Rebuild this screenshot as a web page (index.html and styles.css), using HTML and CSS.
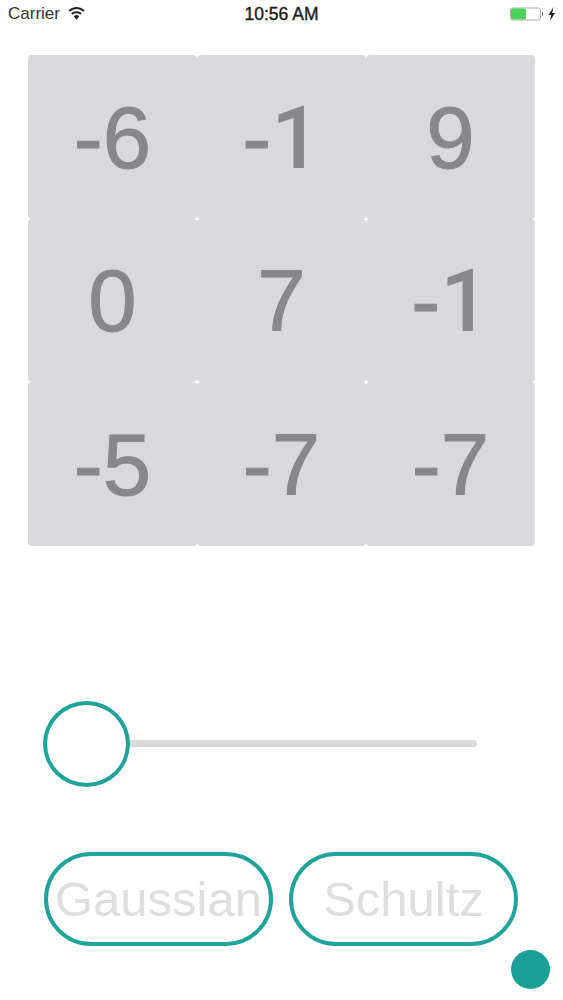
FILE: index.html
```html
<!DOCTYPE html>
<html lang="en">
<head>
    <meta charset="UTF-8">
    <meta name="viewport" content="width=device-width, initial-scale=1.0">
    <title>Noise Matrix</title>
    <link rel="stylesheet" href="styles.css">
</head>
<body>
    <div class="status-bar">
        <div class="status-left">
            <span>Carrier</span>
            <svg class="wifi-icon" width="17" height="13" viewBox="0 0 16 12">
                <path d="M8 11.800 5.400 8.700a3.800 3.800 0 0 1 5.200 0z" fill="#222"/>
                <path d="M3.700 6.500a6.400 6.400 0 0 1 8.600 0" fill="none" stroke="#222" stroke-width="2"/>
                <path d="M1 3.600a10.300 10.300 0 0 1 14 0" fill="none" stroke="#222" stroke-width="2"/>
            </svg>
        </div>
        <div class="status-time">10:56 AM</div>
        <div class="status-right">
            <svg width="45" height="14" viewBox="0 0 45 14">
                <rect x="0.500" y="1" width="30" height="12" rx="2.500" fill="#fff" stroke="#aaa"/>
                <rect x="1" y="1.500" width="15" height="11" rx="2" fill="#4cd35a"/>
                <path d="M32 5c1.400 0 1.400 4 0 4z" fill="#444"/>
                <path d="M43.500 0 38.500 8h2.800L40 14 45 6h-2.800z" fill="#222"/>
            </svg>
        </div>
    </div>

    <div class="matrix">
        <div class="cell">-6</div>
        <div class="cell">-<span class="digit-one">1</span></div>
        <div class="cell">9</div>
        <div class="cell">0</div>
        <div class="cell">7</div>
        <div class="cell">-<span class="digit-one">1</span></div>
        <div class="cell">-5</div>
        <div class="cell">-7</div>
        <div class="cell">-7</div>
    </div>

    <div class="slider">
        <div class="slider-thumb"></div>
        <div class="slider-track"></div>
    </div>

    <div class="buttons">
        <div class="pill-button">Gaussian</div>
        <div class="pill-button">Schultz</div>
    </div>

    <div class="floating-dot"></div>
</body>
</html>
```

FILE: styles.css
```css
* {
    margin: 0;
    padding: 0;
    box-sizing: border-box;
}

html, body {
    height: 100%;
}

body {
    position: relative;
    background: #ffffff;
    font-family: "Liberation Sans", Arial, sans-serif;
    overflow: hidden;
}

.status-bar {
    display: grid;
    grid-template-columns: 1fr auto 1fr;
    align-items: center;
    height: 28px;
    padding: 0 8px;
    font-size: 17px;
    color: #333333;
}

.status-left {
    display: flex;
    align-items: center;
    gap: 8px;
}

.wifi-icon {
    margin-top: -2px;
}

.status-time {
    font-size: 17.5px;
    color: #1c1c1c;
    -webkit-text-stroke: 0.4px #1c1c1c;
}

.status-right {
    display: flex;
    justify-content: flex-end;
}

.matrix {
    display: grid;
    grid-template-columns: repeat(3, 169px);
    grid-auto-rows: 163.67px;
    margin: 27px 0 0 28px;
}

.cell {
    display: flex;
    align-items: center;
    justify-content: center;
    padding-top: 2px;
    background: #d9d8db;
    border-radius: 4px;
    font-size: 87px;
    color: #88878a;
    -webkit-text-stroke: 1px #88878a;
}

/* liberation has a foot on its 1, the reference doesn't */
.digit-one {
    font-family: Roboto, "Liberation Sans", sans-serif;
    font-weight: 500;
    -webkit-text-stroke: 0;
}

.slider {
    display: flex;
    align-items: center;
    margin: 155px 0 0 43px;
}

.slider-thumb {
    width: 87px;
    height: 86px;
    border: 4px solid #1fa39a;
    border-radius: 50%;
    background: #ffffff;
}

.slider-track {
    width: 347px;
    height: 7px;
    background: #d9d8db;
    border-radius: 0 4px 4px 0;
}

.buttons {
    display: flex;
    gap: 16px;
    margin: 65px 0 0 44px;
}

.pill-button {
    display: flex;
    align-items: center;
    justify-content: center;
    width: 229px;
    height: 94px;
    border: 4px solid #1fa39a;
    border-radius: 47px;
    font-size: 49px;
    color: #dedde0;
}

.floating-dot {
    position: absolute;
    left: 511px;
    top: 950px;
    width: 39px;
    height: 39px;
    border-radius: 50%;
    background: #1ba098;
}
```
